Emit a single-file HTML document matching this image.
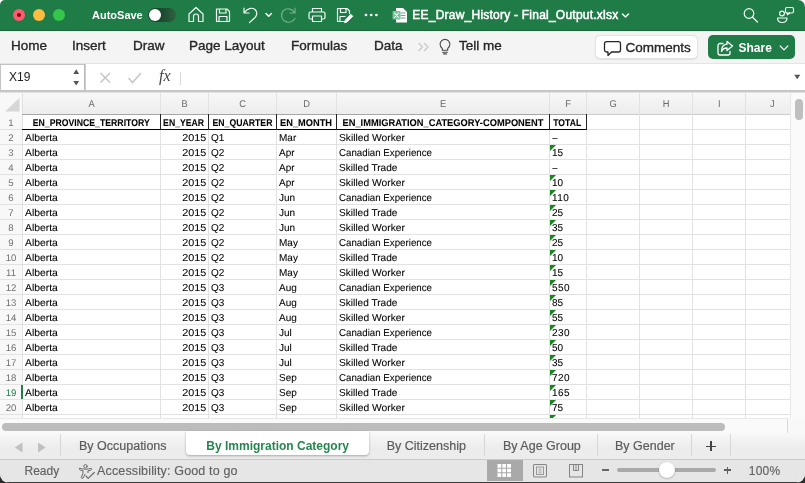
<!DOCTYPE html>
<html><head><meta charset="utf-8"><title>EE_Draw_History - Final_Output.xlsx</title>
<style>
*{box-sizing:border-box;margin:0;padding:0}
html,body{width:805px;height:483px;overflow:hidden;background:#fff;font-family:"Liberation Sans",sans-serif}
.bc{position:absolute;top:473px;width:10px;height:10px;background:#2b2b2b}
#win{will-change:transform;opacity:0.9999;position:absolute;left:0;top:0;width:805px;height:483px;overflow:hidden;border-radius:5px 7px 9px 9px;background:#ececec}
/* title bar */
#title{position:absolute;left:0;top:0;width:805px;height:31px;background:#1f7c47;z-index:5;border-bottom:1px solid #18683a}
.tl{position:absolute;top:9px;width:12px;height:12px;border-radius:50%}
#title .txt{position:absolute;color:#fff;white-space:pre}
#title svg{position:absolute;overflow:visible}
/* ribbon tabs */
#ribbon{position:absolute;left:0;top:31px;width:805px;height:32px;background:#f4f4f4;z-index:5}
#ribbon .t{position:absolute;top:7px;font-size:13.5px;color:#262626;white-space:pre;line-height:16px;-webkit-text-stroke:0.35px #262626}
#ribbon svg{position:absolute;overflow:visible}
.btn{position:absolute;top:4px;height:24px;border-radius:5px}
/* formula bar */
#fbar{position:absolute;left:0;top:63px;width:805px;height:30px;background:#fff;border-top:1px solid #e4e4e4;z-index:5}
#fbar svg{position:absolute;overflow:visible}
/* grid */
#grid{position:absolute;left:0;top:0;width:805px;height:418px;background:#fff;overflow:hidden}
#grid > *{position:absolute}
#grid .hdrbg{left:0;top:93px;width:790px;height:22px;background:linear-gradient(#f7f7f7,#ededed);border-bottom:1px solid #cdcdcd}
#grid .rhbg{left:0;top:93px;width:23px;height:330px;background:#f8f8f8;border-right:1px solid #cdcdcd}
.ch{top:93px;height:21px;line-height:21px;text-align:center;font-size:9.8px;color:#6a6a6a;padding-left:1.5px;transform:scaleX(.95) skewX(.05deg)}
.vl{top:93px;width:1px;height:330px;background:#e2e2e2}
.hl{left:0;width:790px;height:1px;background:#e2e2e2}
.rh{left:0;width:22px;height:15px;line-height:15px;text-align:center;font-size:9.6px;color:#707070;transform:skewX(.05deg)}
.rh.sel{color:#1f7c47}
.rh.sel:after{content:'';position:absolute;left:21px;top:0;width:2px;height:15px;background:#1f7c47}
.c{height:15px;line-height:16px;font-size:10px;color:#000;white-space:pre;-webkit-text-stroke:0.08px #000}
.c.b{font-weight:700;text-align:center}
.s{display:inline-block;transform-origin:0 82%}
.s.sr{transform-origin:100% 82%}
.hc .s{transform-origin:50% 82%}
.hb{border-top:1px solid #a6a6a6;border-bottom:1.4px solid #000}
.hbv{width:1px;background:#222}
.tri{width:0;height:0;border-top:6px solid #17861f;border-right:6px solid transparent}
/* vertical scrollbar */
#vsb{position:absolute;left:790px;top:93px;width:15px;height:325px;background:#fafafa;border-left:1px solid #e8e8e8;z-index:4}
#vsb i{position:absolute;left:3.5px;top:5.5px;width:8.5px;height:21px;border-radius:4.5px;background:#bfbfbf}
/* bottom */
#hsb{position:absolute;left:0;top:418px;width:805px;height:15px;background:#f8f8f8;z-index:5}
#hsb .track{position:absolute;left:0;top:0;width:787.5px;height:15px;background:#fafafa;border-right:1px solid #d9d9d9;border-top:1px solid #e9e9e9}
#hsb .thumb{position:absolute;left:2px;top:4.5px;width:723px;height:8px;border-radius:4px;background:#bcbcbc}
#tabs{position:absolute;left:0;top:433px;width:805px;height:27px;background:linear-gradient(#f8f8f8,#ececec 60%);z-index:5;border-bottom:1px solid #c9c9c9}
#tabs .t{position:absolute;top:4.8px;line-height:16px;font-size:12.5px;color:#5c5c5c;white-space:pre;-webkit-text-stroke:0.2px #5c5c5c}
#tabs .sep{position:absolute;top:1px;width:1px;height:22px;background:#d6d6d6}
#tabs .act{position:absolute;left:185.5px;top:-2px;width:183px;height:23.5px;background:#fff;border-radius:0 0 4px 4px;box-shadow:0 1px 2.5px rgba(0,0,0,.3)}
#status{position:absolute;left:0;top:460px;width:805px;height:23px;background:#e6e6e6;z-index:5;border-bottom:1px solid #3a3a3a}
#status .t{position:absolute;top:3.8px;-webkit-text-stroke:0.15px #626262;line-height:15px;font-size:12.5px;color:#626262;white-space:pre}
#status svg,#tabs svg{position:absolute;overflow:visible}

</style></head>
<body>
<div class="bc" style="left:0"></div><div class="bc" style="left:795px"></div>
<div id="win">
<div id="title">
<div class="tl" style="left:13px;background:#fd5c70"></div><div class="tl" style="left:17px;top:13px;width:4px;height:4px;background:#8a0012"></div>
<div class="tl" style="left:33px;background:#fdbb40"></div>
<div class="tl" style="left:53px;background:#35c74b"></div>
<div class="txt" style="left:92px;top:8px;font-size:11px;font-weight:700;line-height:14px">AutoSave</div>
<div style="position:absolute;left:148px;top:8px;width:28px;height:14px;border-radius:7px;background:linear-gradient(90deg,#1b4a2e 50%,#2f6143)"></div>
<div style="position:absolute;left:149px;top:9px;width:12px;height:12px;border-radius:6px;background:#fff"></div>
<svg width="805" height="30" viewBox="0 0 805 30" style="left:0;top:0" fill="none" stroke="#f2fbf5" stroke-width="1.2" stroke-linecap="round" stroke-linejoin="round">
 <!-- home -->
 <path d="M189 14 L196 7.5 L203 14 V21.5 H198.5 V16.5 a2.5 2.5 0 0 0 -5 0 V21.5 H189 Z"/>
 <!-- save -->
 <path d="M216.5 9 H227 L229.5 11.5 V21.5 H216.5 Z M219.5 9 V13 H226 V9 M219 21.5 V16.5 H227 V21.5"/>
 <!-- undo -->
 <path d="M244 8 V13 H249 M244.5 12.5 C247 8.5 252 7 255 9.5 C258 12.5 257 16 254 18.5 L249.5 22.5"/>
 <path d="M266 13.5 L268.7 16.2 L271.4 13.5" stroke-width="1.6"/>
 <!-- redo (dim) -->
 <g opacity="0.4"><path d="M295 8 V13 H290 M294.5 12.5 C292 8.5 286.5 7.5 283.5 10.5 C280.5 13.5 281 18.5 284.5 21 C288 23.5 293 22 295 18.5"/></g>
 <!-- print -->
 <path d="M312.5 12 V8.5 H321.5 V12 M312.5 19 H310.5 a1.5 1.5 0 0 1 -1.5 -1.5 V13.5 a1.5 1.5 0 0 1 1.5 -1.5 H323.5 a1.5 1.5 0 0 1 1.5 1.5 V17.5 a1.5 1.5 0 0 1 -1.5 1.5 H321.5 M312.5 16 H321.5 V21.5 H312.5 Z"/>
 <!-- save as -->
 <path d="M345 21.5 H337.5 V8.5 H347 L349.5 11 V13.5 M340.5 8.5 V12.5 H346 V8.5 M340 21.5 V16.5 H345"/>
 <path d="M351 14.5 L352.8 16.3 L347 22 L344.5 22.7 L345.3 20.3 Z" fill="#fff" stroke-width="1"/>
 <!-- dots -->
 <g fill="#fff" stroke="none"><circle cx="366" cy="15" r="1.35"/><circle cx="371.2" cy="15" r="1.35"/><circle cx="376.4" cy="15" r="1.35"/></g>
 <!-- excel doc icon -->
 <g stroke="none"><path d="M396 8 H403 L407 12 V22.5 H396 Z" fill="#fff"/><rect x="392.5" y="11" width="8" height="8.5" rx="1" fill="#79c198"/><path d="M401 13h4M401 15.5h4M401 18h4" stroke="#6aa884" stroke-width="1"/><path d="M394.5 13 L398.5 17.5 M398.5 13 L394.5 17.5" stroke="#fff" stroke-width="1.1"/></g>
 <!-- title chevron -->
 <path d="M622.5 14 L625.5 17 L628.5 14" stroke-width="1.5"/>
 <!-- search -->
 <circle cx="749" cy="13.5" r="4.8"/><path d="M752.6 17.2 L757.5 22"/>
 <!-- people/comment -->
 <rect x="785.5" y="7.5" width="8" height="5.5" rx="1.5"/><path d="M787 13 L787.5 14.8 L789.5 13" />
 <circle cx="782" cy="13.5" r="2.4"/><path d="M777.5 18 H787 C787 21 785 22.5 782.2 22.5 C779.5 22.5 777.5 21 777.5 18 Z"/>
</svg>
<div class="txt" style="left:412.3px;top:7px;font-size:12px;letter-spacing:0.23px;line-height:16px;-webkit-text-stroke:0.5px #fff">EE_Draw_History - Final_Output.xlsx</div>
</div>
<div id="ribbon">
<div class="t" style="left:11px">Home</div>
<div class="t" style="left:72px">Insert</div>
<div class="t" style="left:133px">Draw</div>
<div class="t" style="left:189px">Page Layout</div>
<div class="t" style="left:291px">Formulas</div>
<div class="t" style="left:374px">Data</div>
<svg width="40" height="33" viewBox="0 0 40 33" style="left:415px;top:0" fill="none" stroke-linecap="round" stroke-linejoin="round">
 <path d="M4 12.5 L7.5 16 L4 19.5 M9.5 12.5 L13 16 L9.5 19.5" stroke="#cdcdcd" stroke-width="1.6"/>
 <path d="M27.3 17.5 C25.8 16.3 25.1 15.000 25.1 13.3 a4.9 4.9 0 0 1 9.8 0 C34.9 15.000 34.2 16.300 32.7 17.500 V19.300 H27.3 Z M27.600 21.200 H32.400 M28.500 22.900 H31.500" stroke="#4a4a4a" stroke-width="1.100"/>
</svg>
<div class="t" style="left:459px">Tell me</div>
<div class="btn" style="left:595px;width:103px;background:#fff;border:1px solid #e3e3e3;box-shadow:0 0.5px 1px rgba(0,0,0,.08)"></div>
<svg width="20" height="18" viewBox="0 0 20 18" style="left:602.5px;top:8.5px" fill="none" stroke="#262626" stroke-width="1.300" stroke-linejoin="round"><path d="M3.500 1.700 H15.500 a2 2 0 0 1 2 2 V10 a2 2 0 0 1 -2 2 H8.500 L5 15.500 V12 H3.500 a2 2 0 0 1 -2 -2 V3.700 a2 2 0 0 1 2 -2 Z"/></svg>
<div class="t" style="left:625.5px;top:9px;font-size:13.5px">Comments</div>
<div class="btn" style="left:708px;width:87px;background:#1f7c47"></div>
<svg width="20" height="18" viewBox="0 0 20 18" style="left:716px;top:8.5px" fill="none" stroke="#fff" stroke-width="1.300" stroke-linejoin="round" stroke-linecap="round"><path d="M7 3.500 H4 a2 2 0 0 0 -2 2 V13 a2 2 0 0 0 2 2 H12 a2 2 0 0 0 2 -2 V11.500"/><path d="M11 1.500 L16.500 6 L11 10.500 V8 C8 8 6.500 9 5.500 11.500 C5.500 7.500 7.500 4.500 11 4.200 Z"/></svg>
<div class="t" style="left:738.5px;top:9px;color:#fff;font-weight:700;-webkit-text-stroke:0;font-size:12px">Share</div>
<svg width="12" height="10" viewBox="0 0 12 10" style="left:778.2px;top:12px" fill="none" stroke="#fff" stroke-width="1.2" stroke-linecap="round" stroke-linejoin="round"><path d="M2.2 3 L6 6.8 L9.8 3"/></svg>
</div>
<div id="fbar">
<div style="position:absolute;left:9px;top:6px;font-size:12px;line-height:14px;color:#222">X19</div>
<svg width="805" height="28" viewBox="0 0 805 28" style="left:0;top:0">
 <path d="M73.300 9.900 L76.200 5.200 L79.100 9.900 Z M73.300 16.900 L76.200 21.600 L79.100 16.900 Z" fill="#555"/>
 <rect x="0.5" y="0.5" width="84.5" height="26" fill="none" stroke="#c4c4c4" stroke-width="1"/><rect x="84.300" y="0" width="1" height="27" fill="#a8a8a8"/>
 <path d="M100.500 9 L110 18.500 M110 9 L100.500 18.500" stroke="#c6c6c6" stroke-width="1.500" fill="none"/>
 <path d="M128.500 14 L132.500 18.500 L141 9" stroke="#c6c6c6" stroke-width="1.500" fill="none"/>
 <rect x="180" y="8" width="1" height="13" fill="#d8d8d8"/>
 <path d="M794.200 10.800 H800.300 L797.250 15.300 Z" fill="#555"/>
</svg>
<div style="position:absolute;left:159px;top:3px;font-family:'Liberation Serif',serif;font-style:italic;font-size:16px;line-height:18px;color:#444">fx</div>
<div style="position:absolute;left:0;top:26px;width:805px;height:2px;background:#c6c6c6"></div><div style="position:absolute;left:0;top:28px;width:805px;height:1px;background:#e2e2e2"></div>
</div>
<div id="vsb"><i></i></div>

<div id="grid"><div class="hdrbg"></div><div class="rhbg"></div><svg style="left:0;top:93px" width="22" height="21" viewBox="0 0 22 21"><path d="M19.5 5 V18.5 H5 Z" fill="#d6d6d6"/></svg>
<div class="ch" style="left:22px;width:138px">A</div>
<div class="ch" style="left:160px;width:48px">B</div>
<div class="ch" style="left:208px;width:68px">C</div>
<div class="ch" style="left:276px;width:60px">D</div>
<div class="ch" style="left:336px;width:213px">E</div>
<div class="ch" style="left:549px;width:37px">F</div>
<div class="ch" style="left:586px;width:53px">G</div>
<div class="ch" style="left:639px;width:53px">H</div>
<div class="ch" style="left:692px;width:53px">I</div>
<div class="ch" style="left:745px;width:53px">J</div>
<div class="vl" style="left:22px"></div>
<div class="vl" style="left:160px"></div>
<div class="vl" style="left:208px"></div>
<div class="vl" style="left:276px"></div>
<div class="vl" style="left:336px"></div>
<div class="vl" style="left:549px"></div>
<div class="vl" style="left:586px"></div>
<div class="vl" style="left:639px"></div>
<div class="vl" style="left:692px"></div>
<div class="vl" style="left:745px"></div>
<div class="rh" style="top:115px">1</div>
<div class="hl" style="top:129px"></div>
<div class="rh" style="top:130px">2</div>
<div class="hl" style="top:144px"></div>
<div class="rh" style="top:145px">3</div>
<div class="hl" style="top:159px"></div>
<div class="rh" style="top:160px">4</div>
<div class="hl" style="top:174px"></div>
<div class="rh" style="top:175px">5</div>
<div class="hl" style="top:189px"></div>
<div class="rh" style="top:190px">6</div>
<div class="hl" style="top:204px"></div>
<div class="rh" style="top:205px">7</div>
<div class="hl" style="top:219px"></div>
<div class="rh" style="top:220px">8</div>
<div class="hl" style="top:234px"></div>
<div class="rh" style="top:235px">9</div>
<div class="hl" style="top:249px"></div>
<div class="rh" style="top:250px">10</div>
<div class="hl" style="top:264px"></div>
<div class="rh" style="top:265px">11</div>
<div class="hl" style="top:279px"></div>
<div class="rh" style="top:280px">12</div>
<div class="hl" style="top:294px"></div>
<div class="rh" style="top:295px">13</div>
<div class="hl" style="top:309px"></div>
<div class="rh" style="top:310px">14</div>
<div class="hl" style="top:324px"></div>
<div class="rh" style="top:325px">15</div>
<div class="hl" style="top:339px"></div>
<div class="rh" style="top:340px">16</div>
<div class="hl" style="top:354px"></div>
<div class="rh" style="top:355px">17</div>
<div class="hl" style="top:369px"></div>
<div class="rh" style="top:370px">18</div>
<div class="hl" style="top:384px"></div>
<div class="rh sel" style="top:385px">19</div>
<div class="hl" style="top:399px"></div>
<div class="rh" style="top:400px">20</div>
<div class="hl" style="top:414px"></div>
<div class="hl" style="top:429px"></div>
<div class="c b hc" style="left:22px;width:138px;top:114.7px;font-size:10px"><span class="s" style="transform:scale(0.8700,0.98) skewX(0.05deg);margin:0 -8.74px">EN_PROVINCE_TERRITORY</span></div>
<div class="c b hc" style="left:160px;width:48px;top:114.7px;font-size:10px"><span class="s" style="transform:scale(0.8677,0.98) skewX(0.05deg);margin:0 -3.12px">EN_YEAR</span></div>
<div class="c b hc" style="left:208px;width:68px;top:114.7px;font-size:10px"><span class="s" style="transform:scale(0.8707,0.98) skewX(0.05deg);margin:0 -4.45px">EN_QUARTER</span></div>
<div class="c b hc" style="left:276px;width:60px;top:114.7px;font-size:10px"><span class="s" style="transform:scale(0.9265,0.98) skewX(0.05deg);margin:0 -2.06px">EN_MONTH</span></div>
<div class="c b hc" style="left:336px;width:213px;top:114.7px;font-size:10px"><span class="s" style="transform:scale(0.9308,0.98) skewX(0.05deg);margin:0 -7.47px">EN_IMMIGRATION_CATEGORY-COMPONENT</span></div>
<div class="c b hc" style="left:549px;width:37px;top:114.7px;font-size:10px"><span class="s" style="transform:scale(0.8640,0.98) skewX(0.05deg);margin:0 -2.20px">TOTAL</span></div>
<div class="hb" style="left:22px;top:114px;width:565px;height:15.8px"></div>
<div class="hbv" style="left:160px;top:114px;height:16px"></div>
<div class="hbv" style="left:208px;top:114px;height:16px"></div>
<div class="hbv" style="left:276px;top:114px;height:16px"></div>
<div class="hbv" style="left:336px;top:114px;height:16px"></div>
<div class="hbv" style="left:549px;top:114px;height:16px"></div>
<div class="hbv" style="left:586px;top:114px;height:16px"></div>
<div class="c" style="left:25px;top:130px"><span class="s" style="transform:scale(1.0351,1) skewX(0.05deg)">Alberta</span></div>
<div class="c r" style="right:599px;top:130px"><span class="s sr" style="transform:scale(1.0787,1) skewX(0.05deg)">2015</span></div>
<div class="c" style="left:211px;top:130px"><span class="s" style="transform:scale(1.0000,1) skewX(0.05deg)">Q1</span></div>
<div class="c" style="left:279px;top:130px"><span class="s" style="transform:scale(1.0000,1) skewX(0.05deg)">Mar</span></div>
<div class="c" style="left:338.6px;top:130px"><span class="s" style="transform:scale(1.0267,1) skewX(0.05deg)">Skilled Worker</span></div>
<div class="c" style="left:552.3px;top:130px"><span class="s" style="letter-spacing:-0.9px;transform:scale(1,1) skewX(0.05deg)">--</span></div>
<div class="c" style="left:25px;top:145px"><span class="s" style="transform:scale(1.0351,1) skewX(0.05deg)">Alberta</span></div>
<div class="c r" style="right:599px;top:145px"><span class="s sr" style="transform:scale(1.0787,1) skewX(0.05deg)">2015</span></div>
<div class="c" style="left:211px;top:145px"><span class="s" style="transform:scale(1.0000,1) skewX(0.05deg)">Q2</span></div>
<div class="c" style="left:279px;top:145px"><span class="s" style="transform:scale(1.0000,1) skewX(0.05deg)">Apr</span></div>
<div class="c" style="left:338.6px;top:145px"><span class="s" style="transform:scale(0.9725,1) skewX(0.05deg)">Canadian Experience</span></div>
<div class="c" style="left:552.3px;top:145px"><span class="s" style="transform:scale(1.0000,1) skewX(0.05deg)">15</span></div>
<div class="tri" style="left:550px;top:145px"></div>
<div class="c" style="left:25px;top:160px"><span class="s" style="transform:scale(1.0351,1) skewX(0.05deg)">Alberta</span></div>
<div class="c r" style="right:599px;top:160px"><span class="s sr" style="transform:scale(1.0787,1) skewX(0.05deg)">2015</span></div>
<div class="c" style="left:211px;top:160px"><span class="s" style="transform:scale(1.0000,1) skewX(0.05deg)">Q2</span></div>
<div class="c" style="left:279px;top:160px"><span class="s" style="transform:scale(1.0000,1) skewX(0.05deg)">Apr</span></div>
<div class="c" style="left:338.6px;top:160px"><span class="s" style="transform:scale(1.0119,1) skewX(0.05deg)">Skilled Trade</span></div>
<div class="c" style="left:552.3px;top:160px"><span class="s" style="letter-spacing:-0.9px;transform:scale(1,1) skewX(0.05deg)">--</span></div>
<div class="c" style="left:25px;top:175px"><span class="s" style="transform:scale(1.0351,1) skewX(0.05deg)">Alberta</span></div>
<div class="c r" style="right:599px;top:175px"><span class="s sr" style="transform:scale(1.0787,1) skewX(0.05deg)">2015</span></div>
<div class="c" style="left:211px;top:175px"><span class="s" style="transform:scale(1.0000,1) skewX(0.05deg)">Q2</span></div>
<div class="c" style="left:279px;top:175px"><span class="s" style="transform:scale(1.0000,1) skewX(0.05deg)">Apr</span></div>
<div class="c" style="left:338.6px;top:175px"><span class="s" style="transform:scale(1.0267,1) skewX(0.05deg)">Skilled Worker</span></div>
<div class="c" style="left:552.3px;top:175px"><span class="s" style="transform:scale(1.0000,1) skewX(0.05deg)">10</span></div>
<div class="tri" style="left:550px;top:175px"></div>
<div class="c" style="left:25px;top:190px"><span class="s" style="transform:scale(1.0351,1) skewX(0.05deg)">Alberta</span></div>
<div class="c r" style="right:599px;top:190px"><span class="s sr" style="transform:scale(1.0787,1) skewX(0.05deg)">2015</span></div>
<div class="c" style="left:211px;top:190px"><span class="s" style="transform:scale(1.0000,1) skewX(0.05deg)">Q2</span></div>
<div class="c" style="left:279px;top:190px"><span class="s" style="transform:scale(1.0000,1) skewX(0.05deg)">Jun</span></div>
<div class="c" style="left:338.6px;top:190px"><span class="s" style="transform:scale(0.9725,1) skewX(0.05deg)">Canadian Experience</span></div>
<div class="c" style="left:552.3px;top:190px"><span class="s" style="letter-spacing:0.45px;transform:scale(1,1) skewX(0.05deg)">110</span></div>
<div class="tri" style="left:550px;top:190px"></div>
<div class="c" style="left:25px;top:205px"><span class="s" style="transform:scale(1.0351,1) skewX(0.05deg)">Alberta</span></div>
<div class="c r" style="right:599px;top:205px"><span class="s sr" style="transform:scale(1.0787,1) skewX(0.05deg)">2015</span></div>
<div class="c" style="left:211px;top:205px"><span class="s" style="transform:scale(1.0000,1) skewX(0.05deg)">Q2</span></div>
<div class="c" style="left:279px;top:205px"><span class="s" style="transform:scale(1.0000,1) skewX(0.05deg)">Jun</span></div>
<div class="c" style="left:338.6px;top:205px"><span class="s" style="transform:scale(1.0119,1) skewX(0.05deg)">Skilled Trade</span></div>
<div class="c" style="left:552.3px;top:205px"><span class="s" style="transform:scale(1.0000,1) skewX(0.05deg)">25</span></div>
<div class="tri" style="left:550px;top:205px"></div>
<div class="c" style="left:25px;top:220px"><span class="s" style="transform:scale(1.0351,1) skewX(0.05deg)">Alberta</span></div>
<div class="c r" style="right:599px;top:220px"><span class="s sr" style="transform:scale(1.0787,1) skewX(0.05deg)">2015</span></div>
<div class="c" style="left:211px;top:220px"><span class="s" style="transform:scale(1.0000,1) skewX(0.05deg)">Q2</span></div>
<div class="c" style="left:279px;top:220px"><span class="s" style="transform:scale(1.0000,1) skewX(0.05deg)">Jun</span></div>
<div class="c" style="left:338.6px;top:220px"><span class="s" style="transform:scale(1.0267,1) skewX(0.05deg)">Skilled Worker</span></div>
<div class="c" style="left:552.3px;top:220px"><span class="s" style="transform:scale(1.0000,1) skewX(0.05deg)">35</span></div>
<div class="tri" style="left:550px;top:220px"></div>
<div class="c" style="left:25px;top:235px"><span class="s" style="transform:scale(1.0351,1) skewX(0.05deg)">Alberta</span></div>
<div class="c r" style="right:599px;top:235px"><span class="s sr" style="transform:scale(1.0787,1) skewX(0.05deg)">2015</span></div>
<div class="c" style="left:211px;top:235px"><span class="s" style="transform:scale(1.0000,1) skewX(0.05deg)">Q2</span></div>
<div class="c" style="left:279px;top:235px"><span class="s" style="transform:scale(1.0000,1) skewX(0.05deg)">May</span></div>
<div class="c" style="left:338.6px;top:235px"><span class="s" style="transform:scale(0.9725,1) skewX(0.05deg)">Canadian Experience</span></div>
<div class="c" style="left:552.3px;top:235px"><span class="s" style="transform:scale(1.0000,1) skewX(0.05deg)">25</span></div>
<div class="tri" style="left:550px;top:235px"></div>
<div class="c" style="left:25px;top:250px"><span class="s" style="transform:scale(1.0351,1) skewX(0.05deg)">Alberta</span></div>
<div class="c r" style="right:599px;top:250px"><span class="s sr" style="transform:scale(1.0787,1) skewX(0.05deg)">2015</span></div>
<div class="c" style="left:211px;top:250px"><span class="s" style="transform:scale(1.0000,1) skewX(0.05deg)">Q2</span></div>
<div class="c" style="left:279px;top:250px"><span class="s" style="transform:scale(1.0000,1) skewX(0.05deg)">May</span></div>
<div class="c" style="left:338.6px;top:250px"><span class="s" style="transform:scale(1.0119,1) skewX(0.05deg)">Skilled Trade</span></div>
<div class="c" style="left:552.3px;top:250px"><span class="s" style="transform:scale(1.0000,1) skewX(0.05deg)">10</span></div>
<div class="tri" style="left:550px;top:250px"></div>
<div class="c" style="left:25px;top:265px"><span class="s" style="transform:scale(1.0351,1) skewX(0.05deg)">Alberta</span></div>
<div class="c r" style="right:599px;top:265px"><span class="s sr" style="transform:scale(1.0787,1) skewX(0.05deg)">2015</span></div>
<div class="c" style="left:211px;top:265px"><span class="s" style="transform:scale(1.0000,1) skewX(0.05deg)">Q2</span></div>
<div class="c" style="left:279px;top:265px"><span class="s" style="transform:scale(1.0000,1) skewX(0.05deg)">May</span></div>
<div class="c" style="left:338.6px;top:265px"><span class="s" style="transform:scale(1.0267,1) skewX(0.05deg)">Skilled Worker</span></div>
<div class="c" style="left:552.3px;top:265px"><span class="s" style="transform:scale(1.0000,1) skewX(0.05deg)">15</span></div>
<div class="tri" style="left:550px;top:265px"></div>
<div class="c" style="left:25px;top:280px"><span class="s" style="transform:scale(1.0351,1) skewX(0.05deg)">Alberta</span></div>
<div class="c r" style="right:599px;top:280px"><span class="s sr" style="transform:scale(1.0787,1) skewX(0.05deg)">2015</span></div>
<div class="c" style="left:211px;top:280px"><span class="s" style="transform:scale(1.0000,1) skewX(0.05deg)">Q3</span></div>
<div class="c" style="left:279px;top:280px"><span class="s" style="transform:scale(1.0000,1) skewX(0.05deg)">Aug</span></div>
<div class="c" style="left:338.6px;top:280px"><span class="s" style="transform:scale(0.9725,1) skewX(0.05deg)">Canadian Experience</span></div>
<div class="c" style="left:552.3px;top:280px"><span class="s" style="letter-spacing:0.45px;transform:scale(1,1) skewX(0.05deg)">550</span></div>
<div class="tri" style="left:550px;top:280px"></div>
<div class="c" style="left:25px;top:295px"><span class="s" style="transform:scale(1.0351,1) skewX(0.05deg)">Alberta</span></div>
<div class="c r" style="right:599px;top:295px"><span class="s sr" style="transform:scale(1.0787,1) skewX(0.05deg)">2015</span></div>
<div class="c" style="left:211px;top:295px"><span class="s" style="transform:scale(1.0000,1) skewX(0.05deg)">Q3</span></div>
<div class="c" style="left:279px;top:295px"><span class="s" style="transform:scale(1.0000,1) skewX(0.05deg)">Aug</span></div>
<div class="c" style="left:338.6px;top:295px"><span class="s" style="transform:scale(1.0119,1) skewX(0.05deg)">Skilled Trade</span></div>
<div class="c" style="left:552.3px;top:295px"><span class="s" style="transform:scale(1.0000,1) skewX(0.05deg)">85</span></div>
<div class="tri" style="left:550px;top:295px"></div>
<div class="c" style="left:25px;top:310px"><span class="s" style="transform:scale(1.0351,1) skewX(0.05deg)">Alberta</span></div>
<div class="c r" style="right:599px;top:310px"><span class="s sr" style="transform:scale(1.0787,1) skewX(0.05deg)">2015</span></div>
<div class="c" style="left:211px;top:310px"><span class="s" style="transform:scale(1.0000,1) skewX(0.05deg)">Q3</span></div>
<div class="c" style="left:279px;top:310px"><span class="s" style="transform:scale(1.0000,1) skewX(0.05deg)">Aug</span></div>
<div class="c" style="left:338.6px;top:310px"><span class="s" style="transform:scale(1.0267,1) skewX(0.05deg)">Skilled Worker</span></div>
<div class="c" style="left:552.3px;top:310px"><span class="s" style="transform:scale(1.0000,1) skewX(0.05deg)">55</span></div>
<div class="tri" style="left:550px;top:310px"></div>
<div class="c" style="left:25px;top:325px"><span class="s" style="transform:scale(1.0351,1) skewX(0.05deg)">Alberta</span></div>
<div class="c r" style="right:599px;top:325px"><span class="s sr" style="transform:scale(1.0787,1) skewX(0.05deg)">2015</span></div>
<div class="c" style="left:211px;top:325px"><span class="s" style="transform:scale(1.0000,1) skewX(0.05deg)">Q3</span></div>
<div class="c" style="left:279px;top:325px"><span class="s" style="transform:scale(1.0000,1) skewX(0.05deg)">Jul</span></div>
<div class="c" style="left:338.6px;top:325px"><span class="s" style="transform:scale(0.9725,1) skewX(0.05deg)">Canadian Experience</span></div>
<div class="c" style="left:552.3px;top:325px"><span class="s" style="letter-spacing:0.45px;transform:scale(1,1) skewX(0.05deg)">230</span></div>
<div class="tri" style="left:550px;top:325px"></div>
<div class="c" style="left:25px;top:340px"><span class="s" style="transform:scale(1.0351,1) skewX(0.05deg)">Alberta</span></div>
<div class="c r" style="right:599px;top:340px"><span class="s sr" style="transform:scale(1.0787,1) skewX(0.05deg)">2015</span></div>
<div class="c" style="left:211px;top:340px"><span class="s" style="transform:scale(1.0000,1) skewX(0.05deg)">Q3</span></div>
<div class="c" style="left:279px;top:340px"><span class="s" style="transform:scale(1.0000,1) skewX(0.05deg)">Jul</span></div>
<div class="c" style="left:338.6px;top:340px"><span class="s" style="transform:scale(1.0119,1) skewX(0.05deg)">Skilled Trade</span></div>
<div class="c" style="left:552.3px;top:340px"><span class="s" style="transform:scale(1.0000,1) skewX(0.05deg)">50</span></div>
<div class="tri" style="left:550px;top:340px"></div>
<div class="c" style="left:25px;top:355px"><span class="s" style="transform:scale(1.0351,1) skewX(0.05deg)">Alberta</span></div>
<div class="c r" style="right:599px;top:355px"><span class="s sr" style="transform:scale(1.0787,1) skewX(0.05deg)">2015</span></div>
<div class="c" style="left:211px;top:355px"><span class="s" style="transform:scale(1.0000,1) skewX(0.05deg)">Q3</span></div>
<div class="c" style="left:279px;top:355px"><span class="s" style="transform:scale(1.0000,1) skewX(0.05deg)">Jul</span></div>
<div class="c" style="left:338.6px;top:355px"><span class="s" style="transform:scale(1.0267,1) skewX(0.05deg)">Skilled Worker</span></div>
<div class="c" style="left:552.3px;top:355px"><span class="s" style="transform:scale(1.0000,1) skewX(0.05deg)">35</span></div>
<div class="tri" style="left:550px;top:355px"></div>
<div class="c" style="left:25px;top:370px"><span class="s" style="transform:scale(1.0351,1) skewX(0.05deg)">Alberta</span></div>
<div class="c r" style="right:599px;top:370px"><span class="s sr" style="transform:scale(1.0787,1) skewX(0.05deg)">2015</span></div>
<div class="c" style="left:211px;top:370px"><span class="s" style="transform:scale(1.0000,1) skewX(0.05deg)">Q3</span></div>
<div class="c" style="left:279px;top:370px"><span class="s" style="transform:scale(1.0000,1) skewX(0.05deg)">Sep</span></div>
<div class="c" style="left:338.6px;top:370px"><span class="s" style="transform:scale(0.9725,1) skewX(0.05deg)">Canadian Experience</span></div>
<div class="c" style="left:552.3px;top:370px"><span class="s" style="letter-spacing:0.45px;transform:scale(1,1) skewX(0.05deg)">720</span></div>
<div class="tri" style="left:550px;top:370px"></div>
<div class="c" style="left:25px;top:385px"><span class="s" style="transform:scale(1.0351,1) skewX(0.05deg)">Alberta</span></div>
<div class="c r" style="right:599px;top:385px"><span class="s sr" style="transform:scale(1.0787,1) skewX(0.05deg)">2015</span></div>
<div class="c" style="left:211px;top:385px"><span class="s" style="transform:scale(1.0000,1) skewX(0.05deg)">Q3</span></div>
<div class="c" style="left:279px;top:385px"><span class="s" style="transform:scale(1.0000,1) skewX(0.05deg)">Sep</span></div>
<div class="c" style="left:338.6px;top:385px"><span class="s" style="transform:scale(1.0119,1) skewX(0.05deg)">Skilled Trade</span></div>
<div class="c" style="left:552.3px;top:385px"><span class="s" style="letter-spacing:0.45px;transform:scale(1,1) skewX(0.05deg)">165</span></div>
<div class="tri" style="left:550px;top:385px"></div>
<div class="c" style="left:25px;top:400px"><span class="s" style="transform:scale(1.0351,1) skewX(0.05deg)">Alberta</span></div>
<div class="c r" style="right:599px;top:400px"><span class="s sr" style="transform:scale(1.0787,1) skewX(0.05deg)">2015</span></div>
<div class="c" style="left:211px;top:400px"><span class="s" style="transform:scale(1.0000,1) skewX(0.05deg)">Q3</span></div>
<div class="c" style="left:279px;top:400px"><span class="s" style="transform:scale(1.0000,1) skewX(0.05deg)">Sep</span></div>
<div class="c" style="left:338.6px;top:400px"><span class="s" style="transform:scale(1.0267,1) skewX(0.05deg)">Skilled Worker</span></div>
<div class="c" style="left:552.3px;top:400px"><span class="s" style="transform:scale(1.0000,1) skewX(0.05deg)">75</span></div>
<div class="tri" style="left:550px;top:400px"></div>
<div class="tri" style="left:550px;top:415px"></div>
</div>
<div id="hsb"><div class="track"></div><div class="thumb"></div></div>
<div id="tabs">
<svg width="60" height="26" viewBox="0 0 60 26" style="left:0;top:0"><path d="M22.5 9.500 V19.500 L14.800 14.500 Z M38 9.500 V19.500 L45.700 14.500 Z" fill="#c0c0c0"/></svg>
<div class="sep" style="left:60px"></div>
<div class="t" style="left:79px">By Occupations</div>
<div class="act"></div>
<div class="t" style="left:206.3px;top:5.2px;font-size:12px;font-weight:700;color:#27864e;-webkit-text-stroke:0">By Immigration Category</div>
<div class="t" style="left:386.700px">By Citizenship</div>
<div class="sep" style="left:484px"></div>
<div class="t" style="left:503px">By Age Group</div>
<div class="sep" style="left:597px"></div>
<div class="t" style="left:615px">By Gender</div>
<div class="sep" style="left:691px"></div>
<div style="position:absolute;left:705.7px;top:12.5px;width:10.2px;height:1.7px;background:#444"></div><div style="position:absolute;left:709.95px;top:8.3px;width:1.7px;height:10.2px;background:#444"></div>
<div class="sep" style="left:729.5px"></div>
</div>
<div id="status">
<div class="t" style="left:24.5px;font-size:12px">Ready</div>
<svg width="18" height="16" viewBox="0 0 18 16" style="left:78px;top:3.5px" fill="none" stroke="#6a6a6a" stroke-width="1" stroke-linecap="round" stroke-linejoin="round"><circle cx="7.5" cy="2.3" r="1.7"/><path d="M1.700 4.300 Q4.500 5.200 7.500 5.200 Q10.500 5.200 13.300 4.300 Q14.300 5.500 12.800 6.200 L9.900 6.800 L10 8.600 M1.700 4.300 Q0.800 5.600 2.300 6.200 L5.100 6.800 L4.900 9.500 L3.200 13.600 Q3.700 15 5 14.100 L7 10.300"/><path d="M8 12 L10.200 14.300 L16.300 8.500" stroke-width="1.100"/></svg>
<div class="t" style="left:97px;letter-spacing:0.15px">Accessibility: Good to go</div>
<div style="position:absolute;left:486.5px;top:0;width:36px;height:20.5px;background:#a9a9a9"></div>
<svg width="120" height="22" viewBox="0 0 120 22" style="left:487px;top:0" fill="none" stroke-width="1">
 <g><rect x="10.500" y="4" width="13.500" height="13" fill="#fff"/><path d="M14.800 4 V17 M19.500 4 V17 M10.500 8.300 H24 M10.500 12.700 H24" stroke="#a9a9a9" stroke-width="1.100"/></g>
 <g stroke="#858585"><rect x="46.500" y="4.500" width="13" height="12.500" rx="0.500"/><rect x="49.500" y="7" width="7" height="7.500" stroke="#999"/><path d="M51.500 9.200h3M51.500 11h3M51.500 12.800h3" stroke="#999" stroke-width="0.800"/></g>
 <g stroke="#858585"><rect x="82.500" y="4.500" width="13" height="12.500"/><path d="M86.500 4.500 V10.500 H91.500 V4.500 M89 4.500 V10.500" /></g>
</svg>
<div style="position:absolute;left:602px;top:8.700px;width:7px;height:2px;background:#666"></div>
<div style="position:absolute;left:617px;top:8px;width:99px;height:4px;border-radius:2px;background:#a9a9a9"></div>
<div style="position:absolute;left:658.500px;top:1.800px;width:16.500px;height:16.500px;border-radius:50%;background:#fff;box-shadow:0 0.500px 1.500px rgba(0,0,0,.35)"></div>
<div style="position:absolute;left:724px;top:9.200px;width:7px;height:1.800px;background:#5e5e5e"></div><div style="position:absolute;left:726.600px;top:6.600px;width:1.800px;height:7px;background:#5e5e5e"></div>
<div class="t" style="left:748.800px;top:4.200px;font-size:12px;letter-spacing:0.2px">100%</div>
</div>

</div>
</body></html>
